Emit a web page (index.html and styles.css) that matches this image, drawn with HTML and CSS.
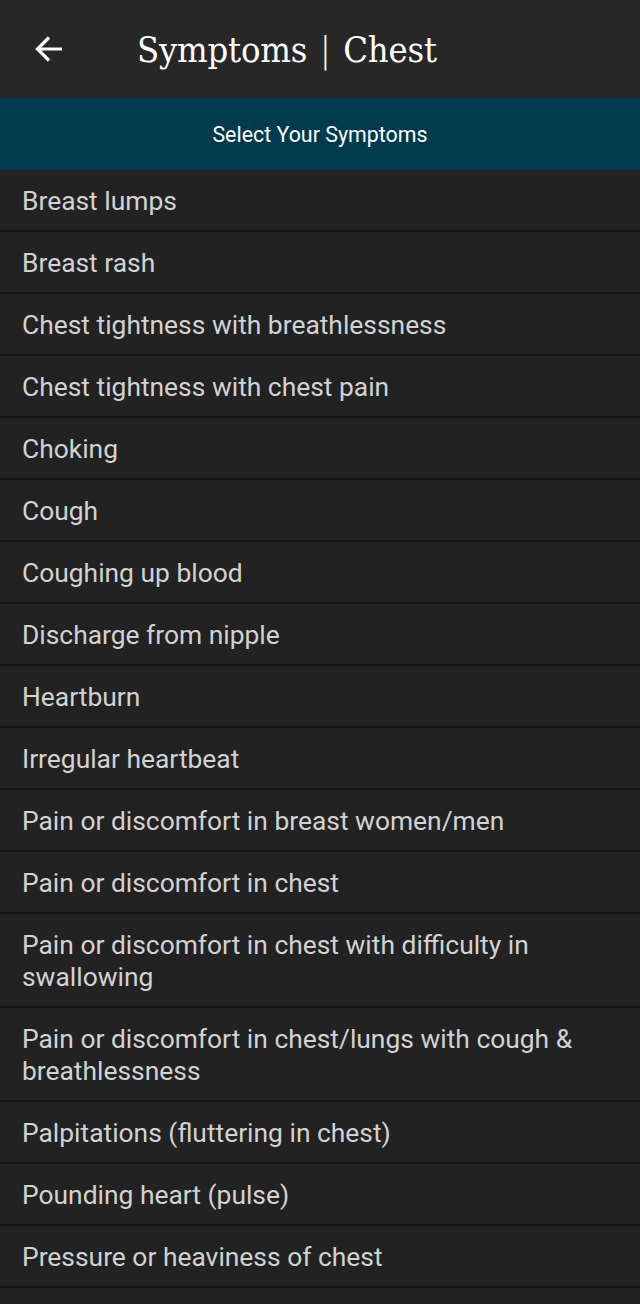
FILE: index.html
```html
<!DOCTYPE html>
<html>
<head>
<meta charset="utf-8">
<link rel="stylesheet" href="styles.css">
</head>
<body>
<header class="topbar">
  <span class="back">
    <svg width="32" height="32" viewBox="0 0 32 32"><path d="M29 16H5M16 4.5L4.5 16L16 27.5" fill="none" stroke="#fff" stroke-width="3.2" stroke-linecap="butt"/></svg>
  </span>
  <h1 class="title">Symptoms <span class="bar">|</span> Chest</h1>
</header>
<div class="band">Select Your Symptoms</div>
<ul class="list">
  <li>Breast lumps</li>
  <li>Breast rash</li>
  <li>Chest tightness with breathlessness</li>
  <li>Chest tightness with chest pain</li>
  <li>Choking</li>
  <li>Cough</li>
  <li>Coughing up blood</li>
  <li>Discharge from nipple</li>
  <li>Heartburn</li>
  <li>Irregular heartbeat</li>
  <li>Pain or discomfort in breast women/men</li>
  <li>Pain or discomfort in chest</li>
  <li>Pain or discomfort in chest with difficulty in swallowing</li>
  <li>Pain or discomfort in chest/lungs with cough &amp; breathlessness</li>
  <li>Palpitations (fluttering in chest)</li>
  <li>Pounding heart (pulse)</li>
  <li>Pressure or heaviness of chest</li>
</ul>
</body>
</html>
```
FILE: styles.css
```css
html, body {
  margin: 0;
  padding: 0;
  background: #222222;
}
body {
  width: 640px;
  height: 1304px;
  overflow: hidden;
  font-family: Roboto, "Liberation Sans", sans-serif;
}
.topbar {
  height: 98px;
  background: #272727;
  display: flex;
  align-items: center;
  box-sizing: border-box;
  padding-left: 33px;
}
.back {
  display: flex;
  width: 32px;
  height: 32px;
}
.title {
  margin: 0 0 0 72px;
  font-family: "DejaVu Serif Condensed", "DejaVu Serif", serif;
  font-weight: normal;
  font-size: 36px;
  color: #ffffff;
  letter-spacing: -0.2px;
}
.bar {
  font-family: "DejaVu Sans", sans-serif;
  font-weight: 200;
  margin: 0 2px;
}
.band {
  height: 72px;
  background: #003a4f;
  color: #ffffff;
  font-size: 21.4px;
  display: flex;
  align-items: center;
  justify-content: center;
}
.list {
  list-style: none;
  margin: 0;
  padding: 0;
}
.list li {
  padding: 15px 30px 13px 22px;
  line-height: 32px;
  font-size: 26.4px;
  color: #d2d2d2;
  border-bottom: 2px solid #141414;
  background: #222222;
}
```
